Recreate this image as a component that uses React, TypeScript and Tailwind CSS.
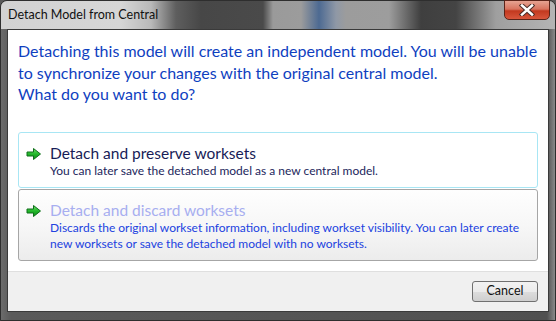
import React from "react";

const font = { fontFamily: 'Lato, "Noto Sans", sans-serif' };

const GreenArrow = () => (
  <svg width="16" height="14" viewBox="0 0 16 14" className="shrink-0">
    <defs>
      <linearGradient id="ga" x1="0" y1="0" x2="0" y2="1">
        <stop offset="0" stopColor="#6fe06a" />
        <stop offset="0.5" stopColor="#22b82a" />
        <stop offset="1" stopColor="#118a1c" />
      </linearGradient>
    </defs>
    <path d="M1 5 H7.5 V1.5 L14.5 7 L7.5 12.5 V9 H1 Z" fill="url(#ga)" stroke="#0f6e1a" strokeWidth="1" strokeLinejoin="round" />
  </svg>
);

const CommandLink = ({
  title,
  desc,
  hot,
}: {
  title: string;
  desc: React.ReactNode;
  hot?: boolean;
}) => (
  <div
    className={
      hot
        ? "flex gap-[8px] pl-[7px] pt-[11px] pb-[8px] rounded-[3px] border border-[#a6a6a6] bg-[linear-gradient(180deg,#fefefe_0%,#f7f7f7_50%,#ececec_100%)]"
        : "flex gap-[8px] pl-[7px] pt-[11px] pb-[8px] rounded-[3px] border border-[#a8e6f4] bg-white"
    }
  >
    <div className="pt-[3px]">
      <GreenArrow />
    </div>
    <div className="flex flex-col whitespace-nowrap">
      <div className={hot ? "text-[15.5px] leading-[19px] text-[#a7aef0]" : "text-[15.5px] leading-[19px] text-[#171c57]"}>
        {title}
      </div>
      <div className={hot ? "text-[12px] leading-[16px] text-[#2142e0]" : "text-[12px] leading-[16px] text-[#1c1f5c]"}>
        {desc}
      </div>
    </div>
  </div>
);

export default function App() {
  return (
    <div className="w-[556px] h-[321px] overflow-hidden bg-[#595959]" style={font}>
      <div className="w-[556px] h-[321px] flex flex-col rounded-t-[7px] border border-[#2e2e2e] bg-[linear-gradient(90deg,#6c6c6c_0px,#5a5a5a_10px,#505050_546px,#8a8a8a_554px)]">
        {/* title bar */}
        <div className="relative shrink-0 h-[28px] flex items-center px-[7px] rounded-t-[6px] bg-[linear-gradient(90deg,#d2d2d2_0px,#d6d6d6_120px,#b9b9b9_150px,#5e5e5e_175px,#474747_200px,#4a4a4a_262px,#9a9a9a_272px,#9c9c9c_300px,#4d6a92_318px,#8f98a6_335px,#9c9c9c_345px,#9d9d9d_388px,#3f3f3f_420px,#444444_455px,#9f9f9f_495px,#b5b5b5_556px)]">
          <span className="text-[12.5px] text-[#111] leading-none">Detach Model from Central</span>
          <div className="absolute right-[5px] top-[-1px] w-[46px] h-[20px] rounded-b-[5px] border border-[#5b2419] bg-[linear-gradient(180deg,#e6a392_0%,#d8745f_45%,#c2391f_55%,#d8563c_100%)] flex items-center justify-center">
            <svg width="16" height="12" viewBox="0 0 16 12">
              <path d="M3 1.5 L13 10.5 M13 1.5 L3 10.5" stroke="#4a2b26" strokeWidth="4.5" strokeLinecap="square" />
              <path d="M3 1.5 L13 10.5 M13 1.5 L3 10.5" stroke="#ffffff" strokeWidth="2.5" strokeLinecap="square" />
            </svg>
          </div>
        </div>

        {/* client area */}
        <div className="flex-1 min-h-0 mx-[6px] mb-[8px] border border-[#3a3a3a] bg-white flex flex-col">
          <div className="flex-1 flex flex-col px-[10px] pt-[10px]">
            <p className="text-[16px] leading-[21.5px] text-[#0f3fbf] whitespace-nowrap">
              Detaching this model will create an independent model. You will be unable
              <br />
              to synchronize your changes with the original central model.
              <br />
              What do you want to do?
            </p>
            <div className="mt-[27px] flex flex-col gap-[1px]">
              <CommandLink
                title="Detach and preserve worksets"
                desc="You can later save the detached model as a new central model."
              />
              <CommandLink
                hot
                title="Detach and discard worksets"
                desc={
                  <>
                    Discards the original workset information, including workset visibility. You can later create
                    <br />
                    new worksets or save the detached model with no worksets.
                  </>
                }
              />
            </div>
          </div>
          <div className="shrink-0 h-[40px] bg-[#f0f0f0] border-t border-[#dfdfdf] flex items-center justify-end pr-[10px]">
            <button className="w-[66px] h-[21px] rounded-[3px] border border-[#707070] bg-[linear-gradient(180deg,#f2f2f2_0%,#ebebeb_50%,#dddddd_51%,#cfcfcf_100%)] text-[12.5px] text-[#111] leading-none">
              Cancel
            </button>
          </div>
        </div>
      </div>
    </div>
  );
}
